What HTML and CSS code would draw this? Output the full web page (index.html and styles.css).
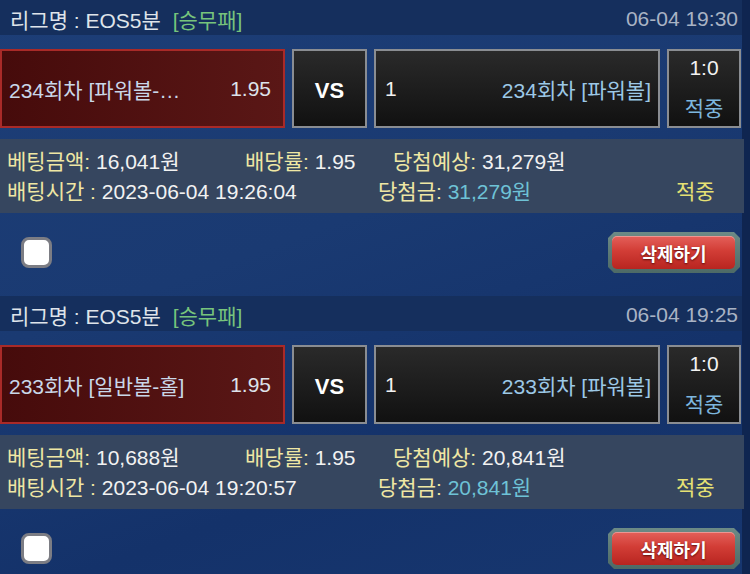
FILE: index.html
```html
<!DOCTYPE html>
<html lang="ko">
<head>
<meta charset="utf-8">
<link rel="stylesheet" href="styles.css">
</head>
<body>
<div class="list">
  <section class="card">
    <div class="card-head">
      <div class="league">리그명 : EOS5분 <span class="type">[승무패]</span></div>
      <div class="date">06-04 19:30</div>
    </div>
    <div class="match">
      <div class="pick home selected"><span class="name">234회차 [파워볼-…</span><span class="odd">1.95</span></div>
      <div class="vs">VS</div>
      <div class="pick away"><span class="odd-w">1</span><span class="name blue">234회차 [파워볼]</span></div>
      <div class="score"><span class="sc">1:0</span><span class="res">적중</span></div>
    </div>
    <div class="info">
      <div class="info-row">
        <div class="c1"><span class="lbl">베팅금액:</span> 16,041원</div>
        <div class="c2"><span class="lbl">배당률:</span> 1.95</div>
        <div class="c3"><span class="lbl">당첨예상:</span> 31,279원</div>
      </div>
      <div class="info-row">
        <div class="d1"><span class="lbl">배팅시간 :</span> 2023-06-04 19:26:04</div>
        <div class="d2"><span class="lbl">당첨금:</span> <span class="win">31,279원</span></div>
        <div class="d3 hit">적중</div>
      </div>
    </div>
    <div class="actions">
      <span class="check"></span>
      <span class="del"><span class="del-in">삭제하기</span></span>
    </div>
  </section>

  <section class="card">
    <div class="card-head">
      <div class="league">리그명 : EOS5분 <span class="type">[승무패]</span></div>
      <div class="date">06-04 19:25</div>
    </div>
    <div class="match">
      <div class="pick home selected"><span class="name">233회차 [일반볼-홀]</span><span class="odd">1.95</span></div>
      <div class="vs">VS</div>
      <div class="pick away"><span class="odd-w">1</span><span class="name blue">233회차 [파워볼]</span></div>
      <div class="score"><span class="sc">1:0</span><span class="res">적중</span></div>
    </div>
    <div class="info">
      <div class="info-row">
        <div class="c1"><span class="lbl">베팅금액:</span> 10,688원</div>
        <div class="c2"><span class="lbl">배당률:</span> 1.95</div>
        <div class="c3"><span class="lbl">당첨예상:</span> 20,841원</div>
      </div>
      <div class="info-row">
        <div class="d1"><span class="lbl">배팅시간 :</span> 2023-06-04 19:20:57</div>
        <div class="d2"><span class="lbl">당첨금:</span> <span class="win">20,841원</span></div>
        <div class="d3 hit">적중</div>
      </div>
    </div>
    <div class="actions">
      <span class="check"></span>
      <span class="del"><span class="del-in">삭제하기</span></span>
    </div>
  </section>
</div>
</body>
</html>
```
FILE: styles.css
```css
* { box-sizing: border-box; }
html, body { margin: 0; padding: 0; }
body {
  width: 750px;
  height: 574px;
  overflow: hidden;
  background: #0f2550;
  font-family: "Liberation Sans", "Noto Sans CJK KR", sans-serif;
  font-size: 21px;
  color: #f2f2f2;
}
.list {
  width: 742px;
  background: linear-gradient(160deg, #1d3e77 0%, #1a3a72 40%, #14326a 70%, #173770 100%);
}
.card {
  height: 296px;
  display: flex;
  flex-direction: column;
}
.card-head {
  height: 35px;
  background: #152f5d;
  display: flex;
  align-items: center;
  justify-content: space-between;
  padding: 3px 4px 0 10px;
}
.league { color: #dfe4ea; }
.type { color: #77c47c; margin-left: 6px; }
.date { color: #a9b3c4; }

.match {
  margin-top: 14px;
  height: 79px;
  display: flex;
  gap: 7px;
}
.pick {
  display: flex;
  align-items: center;
  justify-content: space-between;
  border: 2px solid #8a8d92;
  background: linear-gradient(180deg, #2a2a2a, #111);
  padding-top: 1px;
}
.home { width: 285px; padding: 1px 12px 0 7px; }
.selected {
  border-color: #a92a28;
  background: linear-gradient(90deg, #460b0b 0%, #5a1716 100%);
}
.home .name { color: #c9d7e8; }
.home .odd { color: #dde3ea; }
.away { width: 286px; padding: 1px 7px 0 9px; }
.odd-w { color: #f2f2f2; }
.blue { color: #9cc8e6; }
.vs {
  width: 75px;
  border: 2px solid #8a8d92;
  background: linear-gradient(180deg, #2a2a2a, #111);
  display: flex;
  align-items: center;
  justify-content: center;
  font-weight: bold;
  font-size: 22px;
  color: #fff;
  padding-top: 4px;
}
.score {
  width: 74px;
  border: 2px solid #8a8d92;
  background: linear-gradient(180deg, #2a2a2a, #111);
  display: flex;
  flex-direction: column;
  align-items: center;
  justify-content: center;
  gap: 21px;
  padding-top: 0;
}
.sc { color: #f2f2f2; line-height: 20px; }
.res { color: #7db6de; line-height: 20px; }

.info {
  margin-top: 11px;
  width: 744px;
  height: 74px;
  background: #36465f;
  padding: 6px 0 0 7px;
}
.info-row { display: flex; height: 30px; align-items: center; }
.lbl { color: #efe7a4; }
.c1 { width: 238px; }
.c2 { width: 148px; }
.d1 { width: 371px; }
.d2 { width: 298px; }
.win { color: #6ec2d6; }
.hit { color: #e6e174; }

.actions {
  flex: 1;
  display: flex;
  align-items: center;
  justify-content: space-between;
  padding: 0 2px 4px 21px;
}
.check {
  width: 31px;
  height: 31px;
  background: #fff;
  border: 3px solid #7c7d84;
  border-radius: 8px;
}
.del {
  width: 132px;
  height: 41px;
  background: linear-gradient(180deg, #6c8a86, #4d6a66);
  clip-path: polygon(6px 0, 126px 0, 132px 6px, 132px 35px, 126px 41px, 6px 41px, 0 35px, 0 6px);
  padding: 4px 5px 4px 4px;
  display: flex;
}
.del-in {
  flex: 1;
  border-radius: 5px;
  background: linear-gradient(180deg, #e4605a 0%, #d23d36 45%, #b82520 100%);
  box-shadow: inset 0 1px 0 rgba(255,255,255,0.35);
  display: flex;
  align-items: center;
  justify-content: center;
  color: #fff;
  font-weight: bold;
  font-size: 18px;
  text-shadow: 0 1px 2px #5a0c0a;
}
```
